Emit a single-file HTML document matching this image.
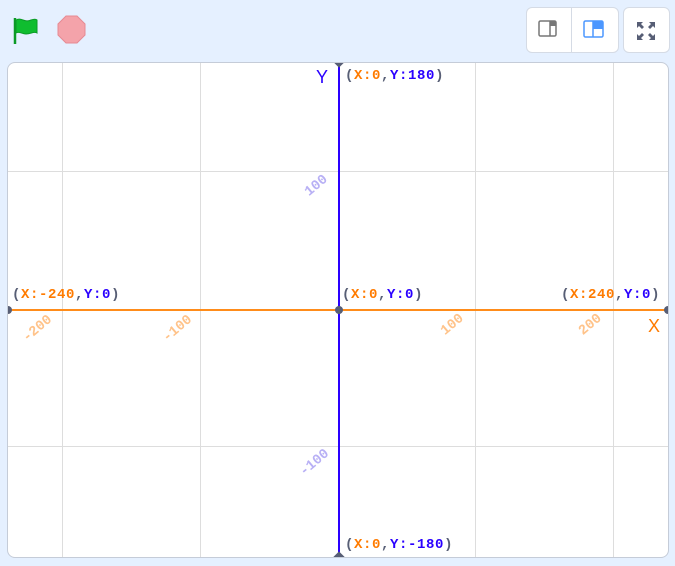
<!DOCTYPE html>
<html><head><style>
body{margin:0;width:675px;height:566px;background:#e5f0ff;position:relative;overflow:hidden;font-family:"Liberation Mono",monospace}
.stage{position:absolute;left:7px;top:62px;width:660px;height:494px;background:#fff;border:1px solid #c5ccd8;border-radius:8px;overflow:hidden}
.v,.h{position:absolute;background:#ddd}
.v{width:1px;top:0;bottom:0}.h{height:1px;left:0;right:0}
.lab{position:absolute;font-size:14px;letter-spacing:0.6px;font-weight:bold;color:#575e75;white-space:nowrap;line-height:14px}
.o{color:#ff7b00}.b{color:#2a00ff}
.t{position:absolute;font-size:14px;font-weight:bold;transform:rotate(-40deg);white-space:nowrap}
.btn{position:absolute;top:7px;height:44px;background:#fff;border:1px solid #d5dbe5}
</style></head><body>
<svg style="position:absolute;left:12px;top:16px" width="32" height="30" viewBox="0 0 32 30"><path d="M3 2v26" stroke="#0b9a26" stroke-width="2.5"/><path d="M4 4c5-3 9 3 15 0 3-1 5-1 6 0v13c-3-2-6 1-11 1-4 0-7-3-10-1z" fill="#0fbd2f" stroke="#0b9a26" stroke-width="1"/></svg>
<svg style="position:absolute;left:56px;top:15px" width="32" height="32" viewBox="0 0 32 32"><polygon points="10,1 21,1 29,9 29,20 21,28 10,28 2,20 2,9" fill="#f4a3aa" stroke="#e68a93" stroke-width="1"/></svg>
<div class="btn" style="left:526px;width:91px;border-radius:6px"></div>
<div style="position:absolute;left:571px;top:8px;width:1px;height:44px;background:#d5dbe5"></div>
<svg style="position:absolute;left:538px;top:20px" width="20" height="18"><rect x="1" y="1" width="17" height="15" rx="1.5" fill="none" stroke="#777" stroke-width="1.5"/><rect x="12" y="1" width="6" height="5" fill="#777"/><path d="M12 1v15" stroke="#777" stroke-width="1.5"/></svg>
<svg style="position:absolute;left:583px;top:20px" width="22" height="18"><rect x="1" y="1" width="19" height="16" rx="1.5" fill="none" stroke="#4c97ff" stroke-width="1.5"/><rect x="10" y="1" width="10" height="8" fill="#4c97ff"/><path d="M10 1v16" stroke="#4c97ff" stroke-width="1.5"/></svg>
<div class="btn" style="left:623px;width:45px;border-radius:6px"></div>
<svg style="position:absolute;left:636px;top:21px" width="20" height="20" viewBox="0 0 20 20" fill="#575e75"><path d="M1 1h6l-2 2 3 3-2 2-3-3-2 2z"/><path d="M19 1h-6l2 2-3 3 2 2 3-3 2 2z"/><path d="M1 19h6l-2-2 3-3-2-2-3 3-2-2z"/><path d="M19 19h-6l2-2-3-3 2-2 3 3 2-2z"/></svg>
<div class="stage">
<div class="v" style="left:54px"></div><div class="v" style="left:192px"></div><div class="v" style="left:467px"></div><div class="v" style="left:605px"></div>
<div class="h" style="top:108px"></div><div class="h" style="top:383px"></div>
<div style="position:absolute;left:0;right:0;top:246px;height:2px;background:#ff8c1a"></div>
<div style="position:absolute;left:330px;top:0;bottom:0;width:2px;background:#2a00ff"></div>
<div style="position:absolute;left:327px;top:243px;width:8px;height:8px;border-radius:50%;background:#575e75"></div>
<div style="position:absolute;left:-4px;top:243px;width:8px;height:8px;border-radius:50%;background:#575e75"></div>
<div style="position:absolute;left:656px;top:243px;width:8px;height:8px;border-radius:50%;background:#575e75"></div>
<div style="position:absolute;left:327px;top:-5px;width:8px;height:8px;background:#575e75;transform:rotate(45deg)"></div>
<div style="position:absolute;left:327px;top:490px;width:8px;height:8px;background:#575e75;transform:rotate(45deg)"></div>
<div class="lab" style="left:337px;top:6px">(<span class="o">X:0</span>,<span class="b">Y:180</span>)</div>
<div class="lab" style="left:334px;top:225px">(<span class="o">X:0</span>,<span class="b">Y:0</span>)</div>
<div class="lab" style="left:4px;top:225px">(<span class="o">X:-240</span>,<span class="b">Y:0</span>)</div>
<div class="lab" style="left:553px;top:225px">(<span class="o">X:240</span>,<span class="b">Y:0</span>)</div>
<div class="lab" style="left:337px;top:475px">(<span class="o">X:0</span>,<span class="b">Y:-180</span>)</div>
<div style="position:absolute;left:308px;top:4px;font:18px 'Liberation Sans',sans-serif;color:#2a00ff">Y</div>
<div style="position:absolute;left:640px;top:253px;font:18px 'Liberation Sans',sans-serif;color:#ff7b00">X</div>
<div class="t" style="left:13px;top:258px;color:#ffc38a">-200</div>
<div class="t" style="left:153px;top:258px;color:#ffc38a">-100</div>
<div class="t" style="left:432px;top:254px;color:#ffc38a">100</div>
<div class="t" style="left:570px;top:254px;color:#ffc38a">200</div>
<div class="t" style="left:296px;top:115px;color:#b8b0f5">100</div>
<div class="t" style="left:290px;top:392px;color:#b8b0f5">-100</div>
</div>
</body></html>
